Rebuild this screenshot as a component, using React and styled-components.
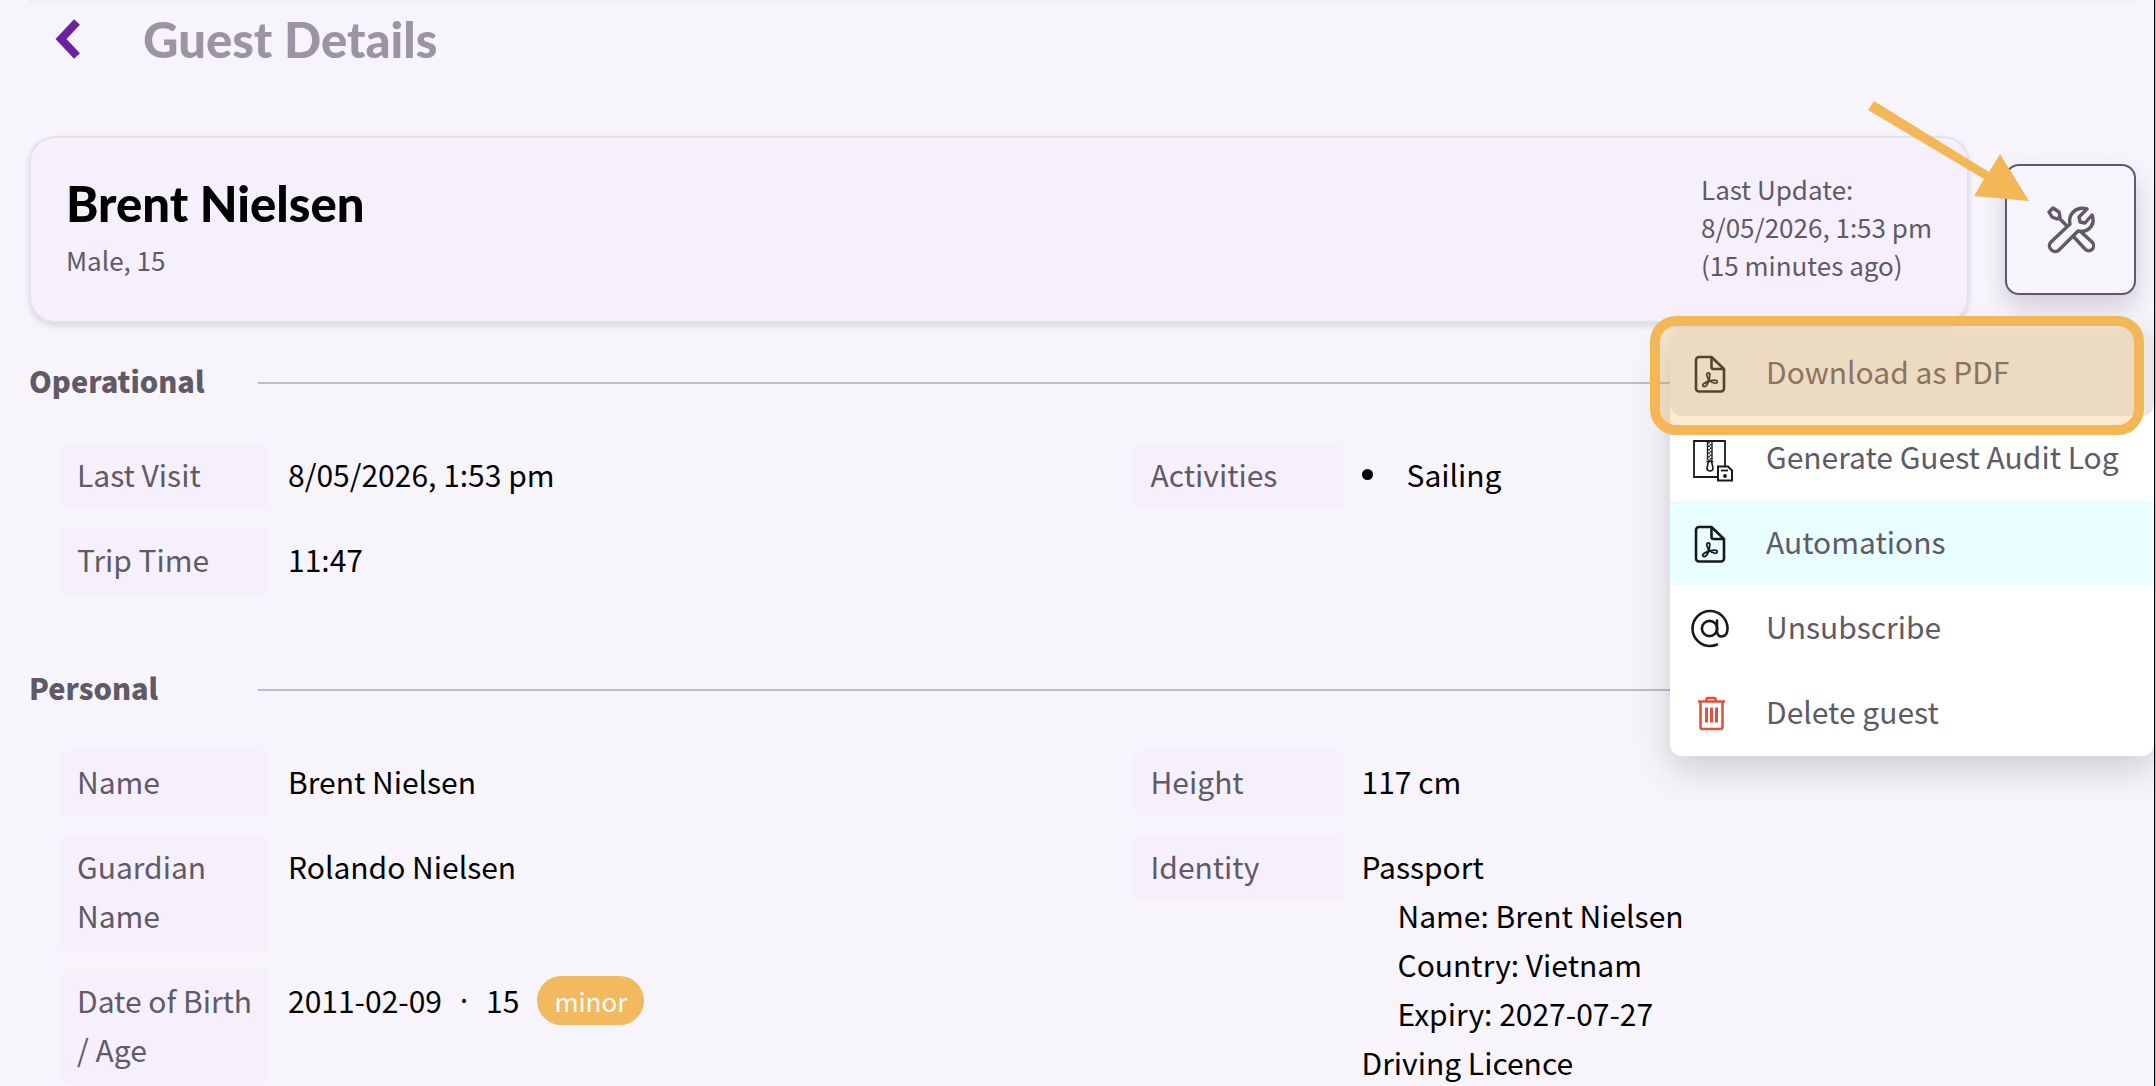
import React from 'react';
import styled, { createGlobalStyle } from 'styled-components';

const GlobalStyle = createGlobalStyle`
    * {
        box-sizing: border-box;
    }
    body {
        margin: 0;
        background-color: #f7f5fb;
        color: #000;
        font-family: "Noto Sans CJK SC", "Noto Sans", sans-serif;
        font-size: 30px;
        line-height: 49px;
    }
    button {
        font: inherit;
        color: inherit;
        cursor: pointer;
    }
`;

const Page = styled.div`
    position: relative;
    height: 100vh;
    overflow: hidden;
    margin-right: 1px;
    padding-left: 29px;
    padding-right: 18px;
    border-right: 1px solid #000;
    box-shadow: 1px 0 0 #bdbcbe;
`;

const TopBar = styled.header`
    display: flex;
    align-items: center;
    gap: 60px;
    height: 80px;
    padding-left: 20px;
    padding-bottom: 2px;
    box-shadow: inset 0 5px 4px -4px rgba(0, 0, 0, 0.05);
`;

const BackButton = styled.button`
    display: flex;
    padding: 0;
    border: none;
    background: none;
`;

const Title = styled.h1`
    margin: 0;
    color: #9a94a3;
    font-family: Lato, sans-serif;
    font-size: 49px;
    font-weight: 900;
`;

const Summary = styled.div`
    display: flex;
    align-items: center;
    gap: 36px;
    margin-top: 56px;
`;

const GuestCard = styled.section`
    flex: 1;
    display: flex;
    align-items: center;
    justify-content: space-between;
    height: 187px;
    padding: 0 35px 6px;
    border: 2px solid #e5e1eb;
    border-radius: 26px;
    background-color: #f6f0fc;
    box-shadow: 0 3px 6px rgba(0, 0, 0, 0.12);
`;

const GuestName = styled.h2`
    margin: 0 0 10px;
    font-family: Lato, sans-serif;
    font-size: 49px;
    font-weight: 900;
    line-height: 56px;
`;

const Muted = styled.div`
    color: #5f5a66;
    font-size: 26px;
    line-height: 38px;
`;

const ToolsButton = styled.button`
    display: flex;
    align-items: center;
    justify-content: center;
    width: 131px;
    height: 131px;
    border: 2px solid #5f5a66;
    border-radius: 14px;
    background-color: #f7f5fb;
    color: #5f5a66;
    box-shadow: 0 12px 24px rgba(60, 40, 70, 0.2);
`;

const SectionTitle = styled.h3`
    display: grid;
    grid-template-columns: 229px 1fr;
    align-items: start;
    height: 50px;
    margin: 35px 0;
    color: #5f5a66;
    font-size: 29px;
    font-weight: 900;
    line-height: 45px;

    &::after {
        content: "";
        height: 2px;
        margin-top: 24px;
        background-color: #bfbac8;
    }
`;

const Columns = styled.div`
    display: grid;
    grid-template-columns: 1fr 1fr;
    gap: 70px;
    padding-left: 30px;
    margin-bottom: 70px;
`;

const Fields = styled.dl`
    display: flex;
    flex-direction: column;
    gap: 18px;
    margin: 0;
`;

const Field = styled.div`
    display: flex;
    align-items: flex-start;
    gap: 18px;
`;

const FieldLabel = styled.dt`
    width: 211px;
    flex-shrink: 0;
    padding: 7px 10px 11px 18px;
    border-radius: 10px;
    background-color: #f6f0fc;
    color: #5f5a66;
`;

const FieldValue = styled.dd`
    margin: 0;
    padding-top: 7px;
`;

const BulletList = styled.ul`
    margin: 0;
    padding: 0;
    list-style: none;

    li {
        display: flex;
        align-items: center;
        gap: 34px;
    }
    li::before {
        content: "";
        width: 11px;
        height: 11px;
        border-radius: 50%;
        background-color: #000;
    }
`;

const Indented = styled.div`
    padding-left: 36px;
`;

const Age = styled.div`
    display: flex;
    align-items: center;
    gap: 18px;
`;

const Separator = styled.span`
    font-family: "Noto Sans", sans-serif;
`;

const Badge = styled.span`
    padding: 0 17px;
    border-radius: 25px;
    background-color: #f3b95f;
    color: #fff;
    font-size: 26px;
`;

// menu opens over the page, under the tools button
const Menu = styled.div`
    position: absolute;
    top: 331px;
    right: 0;
    width: 484px;
    border-radius: 12px;
    background-color: #fff;
    box-shadow: 0 12px 36px rgba(60, 40, 60, 0.22);
`;

const MenuItem = styled.button`
    display: flex;
    align-items: center;
    gap: 32px;
    width: 100%;
    height: 85px;
    padding: 0 18px;
    border: none;
    border-radius: ${props => (props.$hovered ? '12px' : '0')};
    background-color: ${props => (props.$hovered ? '#e9e9e9' : props.$active ? '#e9fefe' : 'transparent')};
    color: #5f5a66;
    white-space: nowrap;

    svg {
        flex-shrink: 0;
        color: #171a1a;
    }
`;

const MenuLabel = styled.span`
    padding-bottom: 4px;
`;

const Highlight = styled.div`
    position: absolute;
    top: 316px;
    right: 10px;
    width: 494px;
    height: 119px;
    border: 10px solid #f3b757;
    border-radius: 26px;
    background-color: rgba(243, 183, 87, 0.28);
    background-clip: padding-box;
    pointer-events: none;
`;

const Arrow = styled.svg`
    position: absolute;
    top: 100px;
    right: 124px;
    pointer-events: none;
`;

function ToolsIcon() {
    return (
        <svg width="48" height="48" viewBox="0 0 48 48" fill="none" stroke="currentColor" strokeWidth="3.4" strokeLinejoin="round">
            <path d="M2 6l4-4 6 4 1 5-3 2-5-2z" />
            <path d="M12 12l8 8" />
            <path d="M4 36L23 18C21 8 29 0 40 3l-8 8 1 5 5 1 7-8c4 10-4 18-14 16L12 44c-5 5-13-3-8-8z" />
            <path d="M26 30l12 13c5 5 12-2 7-7L33 25" />
        </svg>
    );
}

function PdfIcon() {
    return (
        <svg width="46" height="46" viewBox="0 0 46 46" fill="none" stroke="currentColor" strokeWidth="2.6" strokeLinejoin="round">
            <path d="M11 6h12.500L36 18v19.500a3 3 0 0 1-3 3H11a3 3 0 0 1-3-3V9a3 3 0 0 1 3-3z" />
            <path d="M23.500 7v9a2 2 0 0 0 2 2H35" />
            <path strokeWidth="1.8" d="M21 29.500c-1-2-2.500-4-2.200-6.300.3-2 3.200-1.800 3 .3-.1 2-.6 4-.8 6zM21 29.500c-.8 2.500-2 5.500-4.500 6-2 .3-2.500-2-.6-3 1.800-.8 3.500-1.500 5.100-3zM21 29.500c2.500.2 4.800-.6 7-.2 2 .5 1.800 3-.4 3-2.500 0-4.600-1.400-6.600-2.800z" />
        </svg>
    );
}

function ZipIcon() {
    return (
        <svg width="46" height="46" viewBox="0 0 46 46" fill="none" stroke="currentColor" strokeWidth="1.8">
            <path d="M29 41H6V5h31v25" />
            <path strokeWidth="1.4" d="M19.500 5v19M24 5v19M18.500 25.500h7" />
            <path strokeWidth="1.6" strokeDasharray="1.5 2" d="M21 6v18M22.600 8v16" />
            <path strokeWidth="1.6" d="M20.500 25l-1.500 7a3 3 0 0 0 6 0l-1.500-7z" />
            <path strokeWidth="2" d="M30 30.500h10l4 4v10H30z" />
            <path d="M33 34.500h7" />
            <circle cx="37" cy="40" r="1" fill="currentColor" />
        </svg>
    );
}

function AtIcon() {
    return (
        <svg width="46" height="46" viewBox="0 0 46 46" fill="none" stroke="currentColor" strokeWidth="2.6" strokeLinecap="round">
            <circle cx="21.500" cy="22.500" r="7.600" />
            <path d="M29 14.500v11c0 7 10.500 7 10.500-3a17.500 17.500 0 1 0-17.500 17.500c3 0 5-.5 7-1.500" />
        </svg>
    );
}

function TrashIcon() {
    return (
        <svg width="46" height="46" viewBox="0 0 46 46" fill="none" stroke="#e2513d" strokeWidth="2.6">
            <path d="M10 10.500h27M18.500 10V8a1 1 0 0 1 1-1h7a1 1 0 0 1 1 1v2" />
            <path d="M12.500 11v25a2 2 0 0 0 2 2h18a2 2 0 0 0 2-2V11" />
            <path strokeWidth="3" d="M18.500 16.500v15M23.500 16.500v15M28.500 16.500v15" />
        </svg>
    );
}

const menuItems = [
    { label: 'Download as PDF', Icon: PdfIcon, hovered: true },
    { label: 'Generate Guest Audit Log', Icon: ZipIcon },
    { label: 'Automations', Icon: PdfIcon, active: true },
    { label: 'Unsubscribe', Icon: AtIcon },
    { label: 'Delete guest', Icon: TrashIcon },
];

function InfoField({ label, children }) {
    return (
        <Field>
            <FieldLabel>{label}</FieldLabel>
            <FieldValue>{children}</FieldValue>
        </Field>
    );
}

function App() {
    return (
        <>
            <GlobalStyle />
            <Page>
                <TopBar>
                    <BackButton aria-label="Back">
                        <svg width="34" height="42" viewBox="0 0 34 42" fill="none" stroke="#6b21a0" strokeWidth="8">
                            <path d="M28 4L12 21l16 17" />
                        </svg>
                    </BackButton>
                    <Title>Guest Details</Title>
                </TopBar>

                <Summary>
                    <GuestCard>
                        <div>
                            <GuestName>Brent Nielsen</GuestName>
                            <Muted>Male, 15</Muted>
                        </div>
                        <Muted>
                            Last Update:<br />
                            8/05/2026, 1:53 pm<br />
                            (15 minutes ago)
                        </Muted>
                    </GuestCard>
                    <ToolsButton aria-label="Tools">
                        <ToolsIcon />
                    </ToolsButton>
                </Summary>

                <SectionTitle>Operational</SectionTitle>
                <Columns>
                    <Fields>
                        <InfoField label="Last Visit">8/05/2026, 1:53 pm</InfoField>
                        <InfoField label="Trip Time">11:47</InfoField>
                    </Fields>
                    <Fields>
                        <InfoField label="Activities">
                            <BulletList>
                                <li>Sailing</li>
                            </BulletList>
                        </InfoField>
                    </Fields>
                </Columns>

                <SectionTitle>Personal</SectionTitle>
                <Columns>
                    <Fields>
                        <InfoField label="Name">Brent Nielsen</InfoField>
                        <InfoField label="Guardian Name">Rolando Nielsen</InfoField>
                        <InfoField label="Date of Birth / Age">
                            <Age>
                                <span>2011-02-09</span>
                                <Separator>·</Separator>
                                <span>15</span>
                                <Badge>minor</Badge>
                            </Age>
                        </InfoField>
                    </Fields>
                    <Fields>
                        <InfoField label="Height">117 cm</InfoField>
                        <InfoField label="Identity">
                            Passport
                            <Indented>
                                Name: Brent Nielsen<br />
                                Country: Vietnam<br />
                                Expiry: 2027-07-27
                            </Indented>
                            Driving Licence
                        </InfoField>
                    </Fields>
                </Columns>

                <Menu>
                    {menuItems.map(({ label, Icon, hovered, active }) => (
                        <MenuItem key={label} $hovered={hovered} $active={active}>
                            <Icon />
                            <MenuLabel>{label}</MenuLabel>
                        </MenuItem>
                    ))}
                </Menu>
                <Highlight />
                <Arrow width="162" height="104" viewBox="0 0 162 104" fill="#f3b757">
                    <path d="M6 1L121 72l11-18 29 47-55-5 10-17L0 10z" />
                </Arrow>
            </Page>
        </>
    );
}

export default App;
